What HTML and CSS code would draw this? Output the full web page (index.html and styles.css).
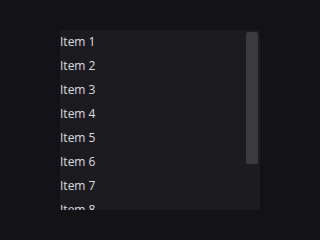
FILE: index.html
```html
<!DOCTYPE html>
<html lang="en">
<head>
    <meta charset="UTF-8">
    <title>List</title>
    <link rel="stylesheet" href="styles.css">
</head>
<body>
    <div class="panel">
        <ul class="list">
            <li>Item 1</li>
            <li>Item 2</li>
            <li>Item 3</li>
            <li>Item 4</li>
            <li>Item 5</li>
            <li>Item 6</li>
            <li>Item 7</li>
            <li>Item 8</li>
            <li>Item 9</li>
            <li>Item 10</li>
        </ul>
        <div class="track">
            <div class="thumb"></div>
        </div>
    </div>
</body>
</html>
```
FILE: styles.css
```css
* {
    box-sizing: border-box;
    margin: 0;
    padding: 0;
}

body {
    background-color: #131317;
    width: 320px;
    height: 240px;
    padding: 30px 60px;
    font-family: 'Open Sans', sans-serif;
}

.panel {
    display: flex;
    height: 180px;
    background-color: #1c1c20;
    overflow: hidden;
}

.list {
    flex: 1;
    list-style: none;
}

.list li {
    height: 24px;
    line-height: 23px;
    font-size: 12px;
    color: #dcdce0;
}

.track {
    width: 16px;
    padding: 2px 2px 0;
}

.thumb {
    height: 132px;
    background-color: #3a3a3f;
    border-radius: 2px;
}
```
